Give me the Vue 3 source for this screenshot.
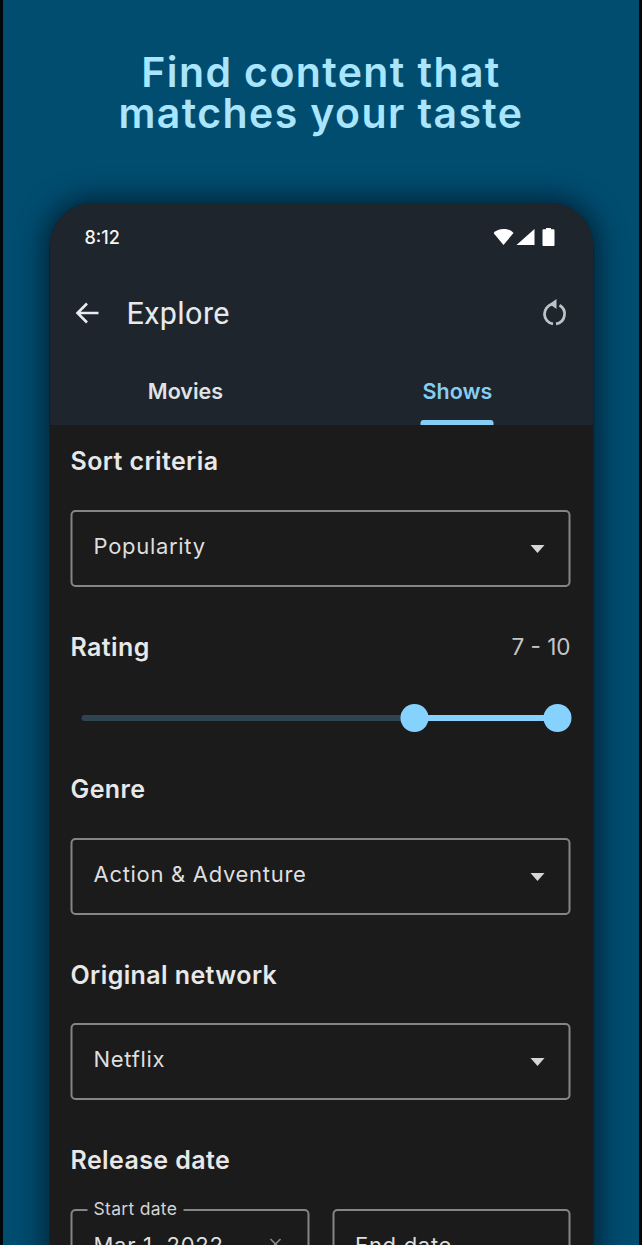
<template>
  <div class="stage">
    <h1 class="headline">Find content that<br />matches your taste</h1>

    <div class="phone">
      <header class="appbar">
        <div class="status">
          <span class="clock">8:12</span>
          <svg class="status-icons" width="62" height="20" viewBox="0 0 62 20">
            <path d="M0 6C5 .5 15 .5 20 6L10 18Z" fill="#fff" />
            <path d="M23 18 41 2V18Z" fill="#fff" />
            <path d="M49 3.500c0-.8.500-1.200 1.200-1.200H52.500V1h5v1.300h2.300c.7 0 1.200.4 1.200 1.200V18c0 .6-.5 1-1 1H50c-.5 0-1-.4-1-1Z" fill="#fff" />
          </svg>
        </div>

        <div class="toolbar">
          <svg class="back" width="26" height="26" viewBox="0 0 26 26" fill="none" stroke="#e8ecef" stroke-width="2.600">
            <path d="M24 13H3M12.500 3.500 3 13l9.500 9.500" />
          </svg>
          <span class="toolbar-title">Explore</span>
          <svg class="reset" width="26" height="30" viewBox="0 0 26 30" fill="none">
            <path d="M11 6.200A10 10 0 0 0 11.500 25.900M14.500 25.900A10 10 0 0 0 18 7.300" stroke="#bcc3c8" stroke-width="2.800" />
            <path d="M15 1V11L8 6Z" fill="#bcc3c8" />
          </svg>
        </div>

        <nav class="tabs">
          <div v-for="tab in tabs" :key="tab" class="tab" :class="{ active: tab === activeTab }">
            <span>{{ tab }}</span>
            <i v-if="tab === activeTab" class="tab-bar"></i>
          </div>
        </nav>
      </header>

      <main class="filters">
        <h2 class="label">Sort criteria</h2>
        <div class="select">
          <span>Popularity</span>
          <i class="caret"></i>
        </div>

        <div class="label-row">
          <h2 class="label">Rating</h2>
          <span class="range-value">{{ rating[0] }} - {{ rating[1] }}</span>
        </div>
        <div class="slider">
          <i class="track"></i>
          <i class="track-on" :style="{ left: pct(rating[0]), right: '0' }"></i>
          <i v-for="v in rating" :key="v" class="thumb" :style="{ left: pct(v) }"></i>
        </div>

        <h2 class="label">Genre</h2>
        <div class="select">
          <span>Action &amp; Adventure</span>
          <i class="caret"></i>
        </div>

        <h2 class="label gap-top tight">Original network</h2>
        <div class="select">
          <span>Netflix</span>
          <i class="caret"></i>
        </div>

        <h2 class="label gap-top">Release date</h2>
        <div class="dates">
          <div class="date">
            <span class="float-label">Start date</span>
            <span class="date-value">Mar 1, 2022</span>
            <svg class="clear" width="14" height="14" viewBox="0 0 14 14" stroke="#8b8b8b" stroke-width="1.600">
              <path d="M2 2l10 10M12 2 2 12" />
            </svg>
          </div>
          <div class="date">
            <span class="date-value empty">End date</span>
          </div>
        </div>
      </main>
    </div>
  </div>
</template>

<script setup>
const tabs = ['Movies', 'Shows']
const activeTab = 'Shows'
const rating = [7, 10]

// slider runs 0-10, returned as offset along the track
const pct = (v) => `${(v / 10) * 100}%`
</script>

<style>
html,
body {
  background: #02070c;
}
</style>

<style scoped>
.stage {
  width: 636px;
  height: 1245px;
  margin-left: 3px;
  overflow: hidden;
  background: #014d70;
  font-family: Inter, "Noto Sans", sans-serif;
  display: flex;
  flex-direction: column;
  align-items: center;
}

.headline {
  margin: 52px 0 0;
  font-family: Inter, sans-serif;
  font-size: 41px;
  line-height: 41px;
  font-weight: 600;
  letter-spacing: 1.400px;
  text-align: center;
  white-space: nowrap;
  color: #a9e5fc;
}

.phone {
  width: 544px;
  flex: none;
  margin-top: 69px;
  border-radius: 44px 44px 0 0;
  box-shadow: 0 0 26px 6px rgba(0, 20, 35, 0.7);
  overflow: hidden;
  background: #1b1b1b;
  transform: translateX(0.5px);
}

.appbar {
  height: 222px;
  background: #1f252d;
  display: flex;
  flex-direction: column;
}

.status {
  height: 68px;
  padding: 0 38px 0 35px;
  display: flex;
  justify-content: space-between;
  align-items: center;
}

.clock {
  font-size: 18px;
  font-weight: 500;
  color: #f4f6f7;
}

.toolbar {
  height: 84px;
  padding: 0 26px 0 25px;
  display: flex;
  align-items: center;
}

.toolbar-title {
  margin-left: 26px;
  font-family: Roboto, sans-serif;
  font-size: 30.500px;
  color: #e6eaec;
  letter-spacing: 0.400px;
}

.reset {
  margin-left: auto;
}

.tabs {
  flex: 1;
  display: flex;
}

.tab {
  position: relative;
  flex: 1;
  padding-top: 22px;
  text-align: center;
  font-size: 21.500px;
  line-height: 28px;
  font-weight: 600;
  color: #dfe3e6;
}

.tab.active {
  color: #86cdf3;
}

.tab-bar {
  position: absolute;
  left: 50%;
  bottom: 0;
  width: 73px;
  height: 5px;
  margin-left: -37px;
  border-radius: 3px 3px 0 0;
  background: #86cdf3;
}

.filters {
  padding: 21px 23px 0 21px;
}

.label {
  margin: 0 0 34px;
  font-size: 25px;
  line-height: 30px;
  font-weight: 600;
  letter-spacing: 0.400px;
  color: #e8e8e8;
}

.gap-top {
  margin-top: 45px;
}

.tight {
  margin-bottom: 33px;
}

.select {
  height: 77px;
  padding: 0 24.500px 6px 21px;
  box-sizing: border-box;
  border: 2px solid #858585;
  border-radius: 5px;
  display: flex;
  justify-content: space-between;
  align-items: center;
  font-size: 22px;
  letter-spacing: 0.700px;
  color: #dedede;
}

.caret {
  margin-top: 6px;
  border-left: 7px solid transparent;
  border-right: 7px solid transparent;
  border-top: 8px solid #d6d6d6;
}

.label-row {
  margin-top: 45px;
  display: flex;
  justify-content: space-between;
  align-items: flex-start;
}

.range-value {
  font-size: 22.500px;
  line-height: 30px;
  color: #c6c6c6;
}

.slider {
  position: relative;
  height: 28px;
  margin: 8px 13px 42px 11px;
}

.track,
.track-on {
  position: absolute;
  top: 11px;
  height: 6px;
  border-radius: 3px;
}

.track {
  left: 0;
  right: 0;
  background: #2e4451;
}

.track-on {
  background: #86d2ff;
}

.thumb {
  position: absolute;
  top: 0;
  width: 28px;
  height: 28px;
  margin-left: -14px;
  border-radius: 50%;
  background: #86d2ff;
}

.dates {
  display: flex;
  gap: 23px;
}

.date {
  position: relative;
  flex: 1;
  height: 77px;
  padding: 21px 0 0 21px;
  box-sizing: border-box;
  border: 2px solid #858585;
  border-radius: 5px;
  color: #dedede;
}

.float-label {
  position: absolute;
  left: 15px;
  top: -13px;
  padding: 0 6px;
  background: #1b1b1b;
  font-size: 17.500px;
  line-height: 22px;
  letter-spacing: 0.300px;
  color: #d4d4d4;
}

.date-value {
  font-size: 22px;
  letter-spacing: 0.700px;
}

.clear {
  position: absolute;
  right: 25px;
  top: 26px;
}
</style>
